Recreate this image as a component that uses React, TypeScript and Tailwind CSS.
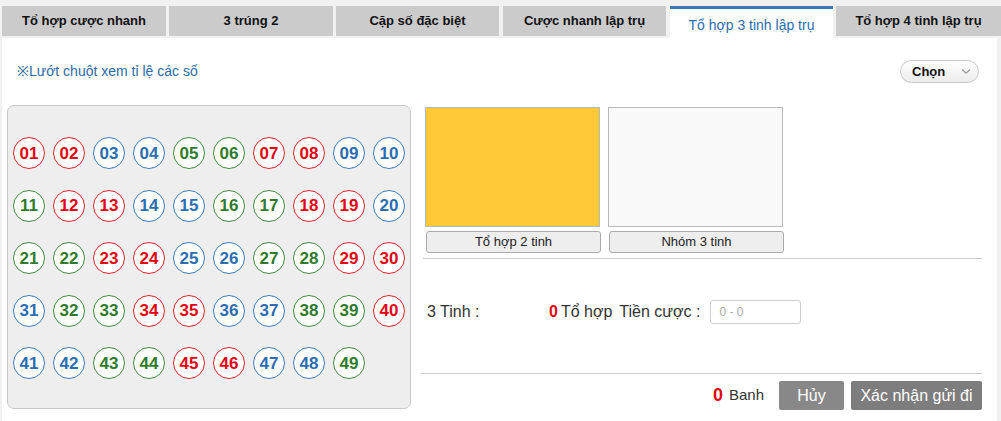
import React from "react";

const RED = [1, 2, 7, 8, 12, 13, 18, 19, 23, 24, 29, 30, 34, 35, 40, 45, 46];
const BLUE = [3, 4, 9, 10, 14, 15, 20, 25, 26, 31, 36, 37, 41, 42, 47, 48];

function Ball({ n }: { n: number }) {
  const cls = RED.includes(n)
    ? "border-[#e8202a] text-[#e60012]"
    : BLUE.includes(n)
    ? "border-[#3a7cc0] text-[#2c6cb0]"
    : "border-[#3e8a3e] text-[#2f7a2c]";
  return (
    <div
      className={`w-[32px] h-[32px] rounded-full border bg-white flex items-center justify-center font-bold text-[17px] leading-none ${cls}`}
    >
      {String(n).padStart(2, "0")}
    </div>
  );
}

const tabs = [
  { t: "Tổ hợp cược nhanh", w: "w-[164px]" },
  { t: "3 trúng 2", w: "w-[164px]" },
  { t: "Cặp số đặc biệt", w: "w-[163px]" },
  { t: "Cược nhanh lập trụ", w: "w-[163px]" },
  { t: "Tổ hợp 3 tinh lập trụ", w: "w-[163px]", active: true },
  { t: "Tổ hợp 4 tinh lập trụ", w: "w-[165px]" },
];

export default function App() {
  const nums = Array.from({ length: 49 }, (_, i) => i + 1);
  return (
    <div
      className="w-[1001px] h-[421px] overflow-hidden bg-[#f1f1f1] pt-[6px] pl-[2px]"
      style={{ fontFamily: '"Liberation Sans", Arial, sans-serif' }}
    >
      {/* Tabs */}
      <div className="flex items-start h-[32px] gap-[3px]">
        {tabs.map((tab, i) =>
          tab.active ? (
            <div
              key={i}
              className={`${tab.w} h-[32px] bg-white border-t-[3px] border-[#3c78b4] flex items-center justify-center pt-[3px] text-[14px] text-[#2c6cb0] ${i > 2 ? "ml-[1px]" : ""}`}
            >
              {tab.t}
            </div>
          ) : (
            <div
              key={i}
              className={`${tab.w} h-[30px] bg-[#cbcbcb] flex items-center justify-center text-[13px] font-bold text-[#111] ${i === 3 ? "ml-[1px]" : ""}`}
            >
              {tab.t}
            </div>
          )
        )}
      </div>

      {/* Main panel */}
      <div className="w-[995px] h-[383px] bg-white">
        {/* hint row */}
        <div className="h-[67px] flex items-center justify-between">
          <span className="pl-[15px] text-[14px] text-[#2f6aa8]">※Lướt chuột xem tỉ lệ các số</span>
          <div className="mr-[18px] w-[79px] h-[23px] rounded-full border border-[#c8c8c8] bg-gradient-to-b from-white to-[#ececec] flex items-center justify-between pl-[11px] pr-[7px]">
            <span className="text-[13px] font-bold text-[#111]">Chọn</span>
            <svg width="10" height="7" viewBox="0 0 10 7">
              <path d="M1 1.5 L5 5.2 L9 1.5" fill="none" stroke="#999" strokeWidth="1.3" />
            </svg>
          </div>
        </div>

        <div className="flex">
          {/* number box */}
          <div className="ml-[5px] w-[404px] h-[304px] rounded-[7px] border border-[#c9c9c9] bg-[#eeeeee] pl-[5px] pt-[31px]">
            <div className="grid grid-cols-[repeat(10,32px)] gap-x-[8px] gap-y-[20.5px]">
              {nums.map((n) => (
                <Ball key={n} n={n} />
              ))}
            </div>
          </div>

          {/* right section */}
          <div className="ml-[10px] w-[561px]">
            <div className="flex gap-[7px] pl-[4px] pt-[2px]">
              <div className="flex flex-col">
                <div className="w-[175px] h-[120px] bg-[#ffc937] border border-[#b9b9b9]" />
                <div className="ml-[1px] mt-[4px] w-[175px] h-[22px] rounded-[3px] border border-[#aaa] bg-[#eeeeee] flex items-center justify-center text-[13px] text-[#222]">
                  Tổ hợp 2 tinh
                </div>
              </div>
              <div className="flex flex-col">
                <div className="w-[175px] h-[120px] bg-[#f9f9f9] border border-[#b9b9b9]" />
                <div className="ml-[1px] mt-[4px] w-[175px] h-[22px] rounded-[3px] border border-[#aaa] bg-[#eeeeee] flex items-center justify-center text-[13px] text-[#222]">
                  Nhóm 3 tinh
                </div>
              </div>
            </div>

            <div className="ml-[2px] mt-[5px] border-t border-[#cccccc] h-[115px]">
              <div className="pt-[41px] flex items-center h-[24px] box-content text-[16px] text-[#333]">
                <span className="ml-[4px] w-[122px] text-[16px]">3 Tinh :</span>
                <span className="font-bold text-[#e60012] text-[16px]">0</span>
                <span className="ml-[3px]">Tổ hợp</span>
                <span className="ml-[7px]">Tiền cược :</span>
                <div className="ml-[10px] w-[91px] h-[24px] rounded-[3px] border border-[#cfcfcf] bg-white flex items-center pl-[8px] text-[12px] text-[#aaa]">
                  0 - 0
                </div>
              </div>
            </div>

            <div className="border-t border-[#cccccc] pt-[7px] flex items-center justify-end gap-[7px]">
              <div className="flex items-center mr-[8px]">
                <span className="font-bold text-[#e60012] text-[18px]">0</span>
                <span className="ml-[6px] text-[15px] text-[#333]">Banh</span>
              </div>
              <div className="w-[65px] h-[29px] rounded-[2px] bg-[#888888] text-white text-[16px] flex items-center justify-center">
                Hủy
              </div>
              <div className="w-[131px] h-[29px] rounded-[2px] bg-[#7d7d7d] text-white text-[16px] flex items-center justify-center">
                Xác nhận gửi đi
              </div>
            </div>
          </div>
        </div>
      </div>
    </div>
  );
}
